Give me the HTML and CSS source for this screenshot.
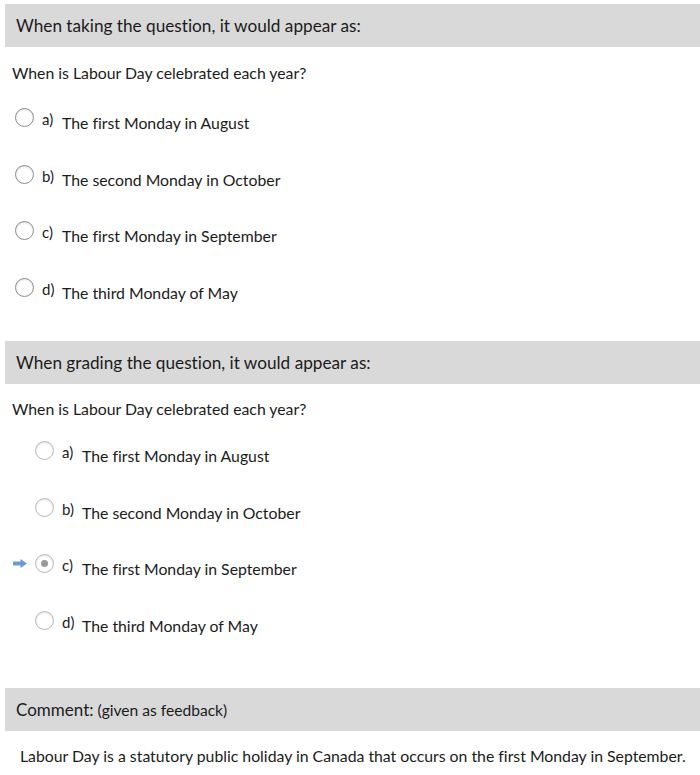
FILE: index.html
```html
<!DOCTYPE html>
<html>
<head>
<meta charset="utf-8">
<link rel="stylesheet" href="styles.css">
</head>
<body>
<div class="page">
  <div class="head head-first">When taking the question, it would appear as:</div>
  <div class="question">When is Labour Day celebrated each year?</div>
  <div class="options">
    <div class="opt"><span class="radio"></span><span class="lbl">a)</span><span class="txt">The first Monday in August</span></div>
    <div class="opt"><span class="radio"></span><span class="lbl">b)</span><span class="txt">The second Monday in October</span></div>
    <div class="opt"><span class="radio"></span><span class="lbl">c)</span><span class="txt">The first Monday in September</span></div>
    <div class="opt"><span class="radio"></span><span class="lbl">d)</span><span class="txt">The third Monday of May</span></div>
  </div>

  <div class="head head-second">When grading the question, it would appear as:</div>
  <div class="question">When is Labour Day celebrated each year?</div>
  <div class="options graded">
    <div class="opt"><span class="mark"></span><span class="radio"></span><span class="lbl">a)</span><span class="txt">The first Monday in August</span></div>
    <div class="opt"><span class="mark"></span><span class="radio"></span><span class="lbl">b)</span><span class="txt">The second Monday in October</span></div>
    <div class="opt"><span class="mark"><svg width="14" height="9" viewBox="0 0 14 9"><path d="M0 2.5H7.5V0L14 4.5L7.5 9V6.5H0Z" fill="#6b9bd6"/></svg></span><span class="radio checked"></span><span class="lbl">c)</span><span class="txt">The first Monday in September</span></div>
    <div class="opt"><span class="mark"></span><span class="radio"></span><span class="lbl">d)</span><span class="txt">The third Monday of May</span></div>
  </div>

  <div class="head head-comment">Comment: <span class="small">(given as feedback)</span></div>
  <div class="comment">Labour Day is a statutory public holiday in Canada that occurs on the first Monday in September.</div>
</div>
</body>
</html>
```

FILE: styles.css
```css
html, body {
  margin: 0;
  padding: 0;
  background: #ffffff;
}

body {
  font-family: Lato, "Liberation Sans", sans-serif;
  color: #1b1b1b;
  font-variant-ligatures: none;
}

.page {
  display: flex;
  flex-direction: column;
}

.head {
  margin-left: 5px;
  height: 43px;
  background: #d9d9d9;
  padding-left: 11px;
  display: flex;
  align-items: center;
  font-size: 17.2px;
  box-sizing: border-box;
}

.head-first { margin-top: 4px; }
.head-second { margin-top: 7px; }
.head-comment { margin-top: 21px; font-size: 17px; }
.head-comment .small { font-size: 15.6px; margin-left: 4px; }

.question {
  font-size: 15.8px;
  line-height: 20px;
  padding-left: 12px;
  margin-top: 16px;
}

.head-second + .question { margin-top: 15px; }

.options {
  display: flex;
  flex-direction: column;
  margin-top: 25px;
}

.options.graded { margin-top: 22px; }

.opt {
  display: flex;
  align-items: flex-start;
  height: 56.5px;
  padding-left: 15px;
}

.graded .opt { padding-left: 13px; }

.mark {
  width: 22px;
  display: flex;
  justify-content: flex-start;
  padding-top: 5px;
}

.radio {
  width: 17px;
  height: 17px;
  border-radius: 50%;
  border: 1px solid #8c8c8c;
  background: #fff;
  box-shadow: inset 0 1px 2px rgba(0,0,0,0.12);
  flex: none;
  display: flex;
  align-items: center;
  justify-content: center;
}

.graded .radio {
  border-color: #b9b9b9;
}

.radio.checked::after {
  content: "";
  width: 7px;
  height: 7px;
  border-radius: 50%;
  background: #9a9a9a;
}

.lbl {
  font-size: 15px;
  line-height: 16px;
  margin-left: 8px;
  margin-top: 3px;
  width: 20px;
}

.txt {
  font-size: 15.8px;
  line-height: 18px;
  margin-top: 6px;
}

.comment {
  font-size: 15.8px;
  line-height: 20px;
  padding-left: 20px;
  margin-top: 15px;
  white-space: nowrap;
}
```
